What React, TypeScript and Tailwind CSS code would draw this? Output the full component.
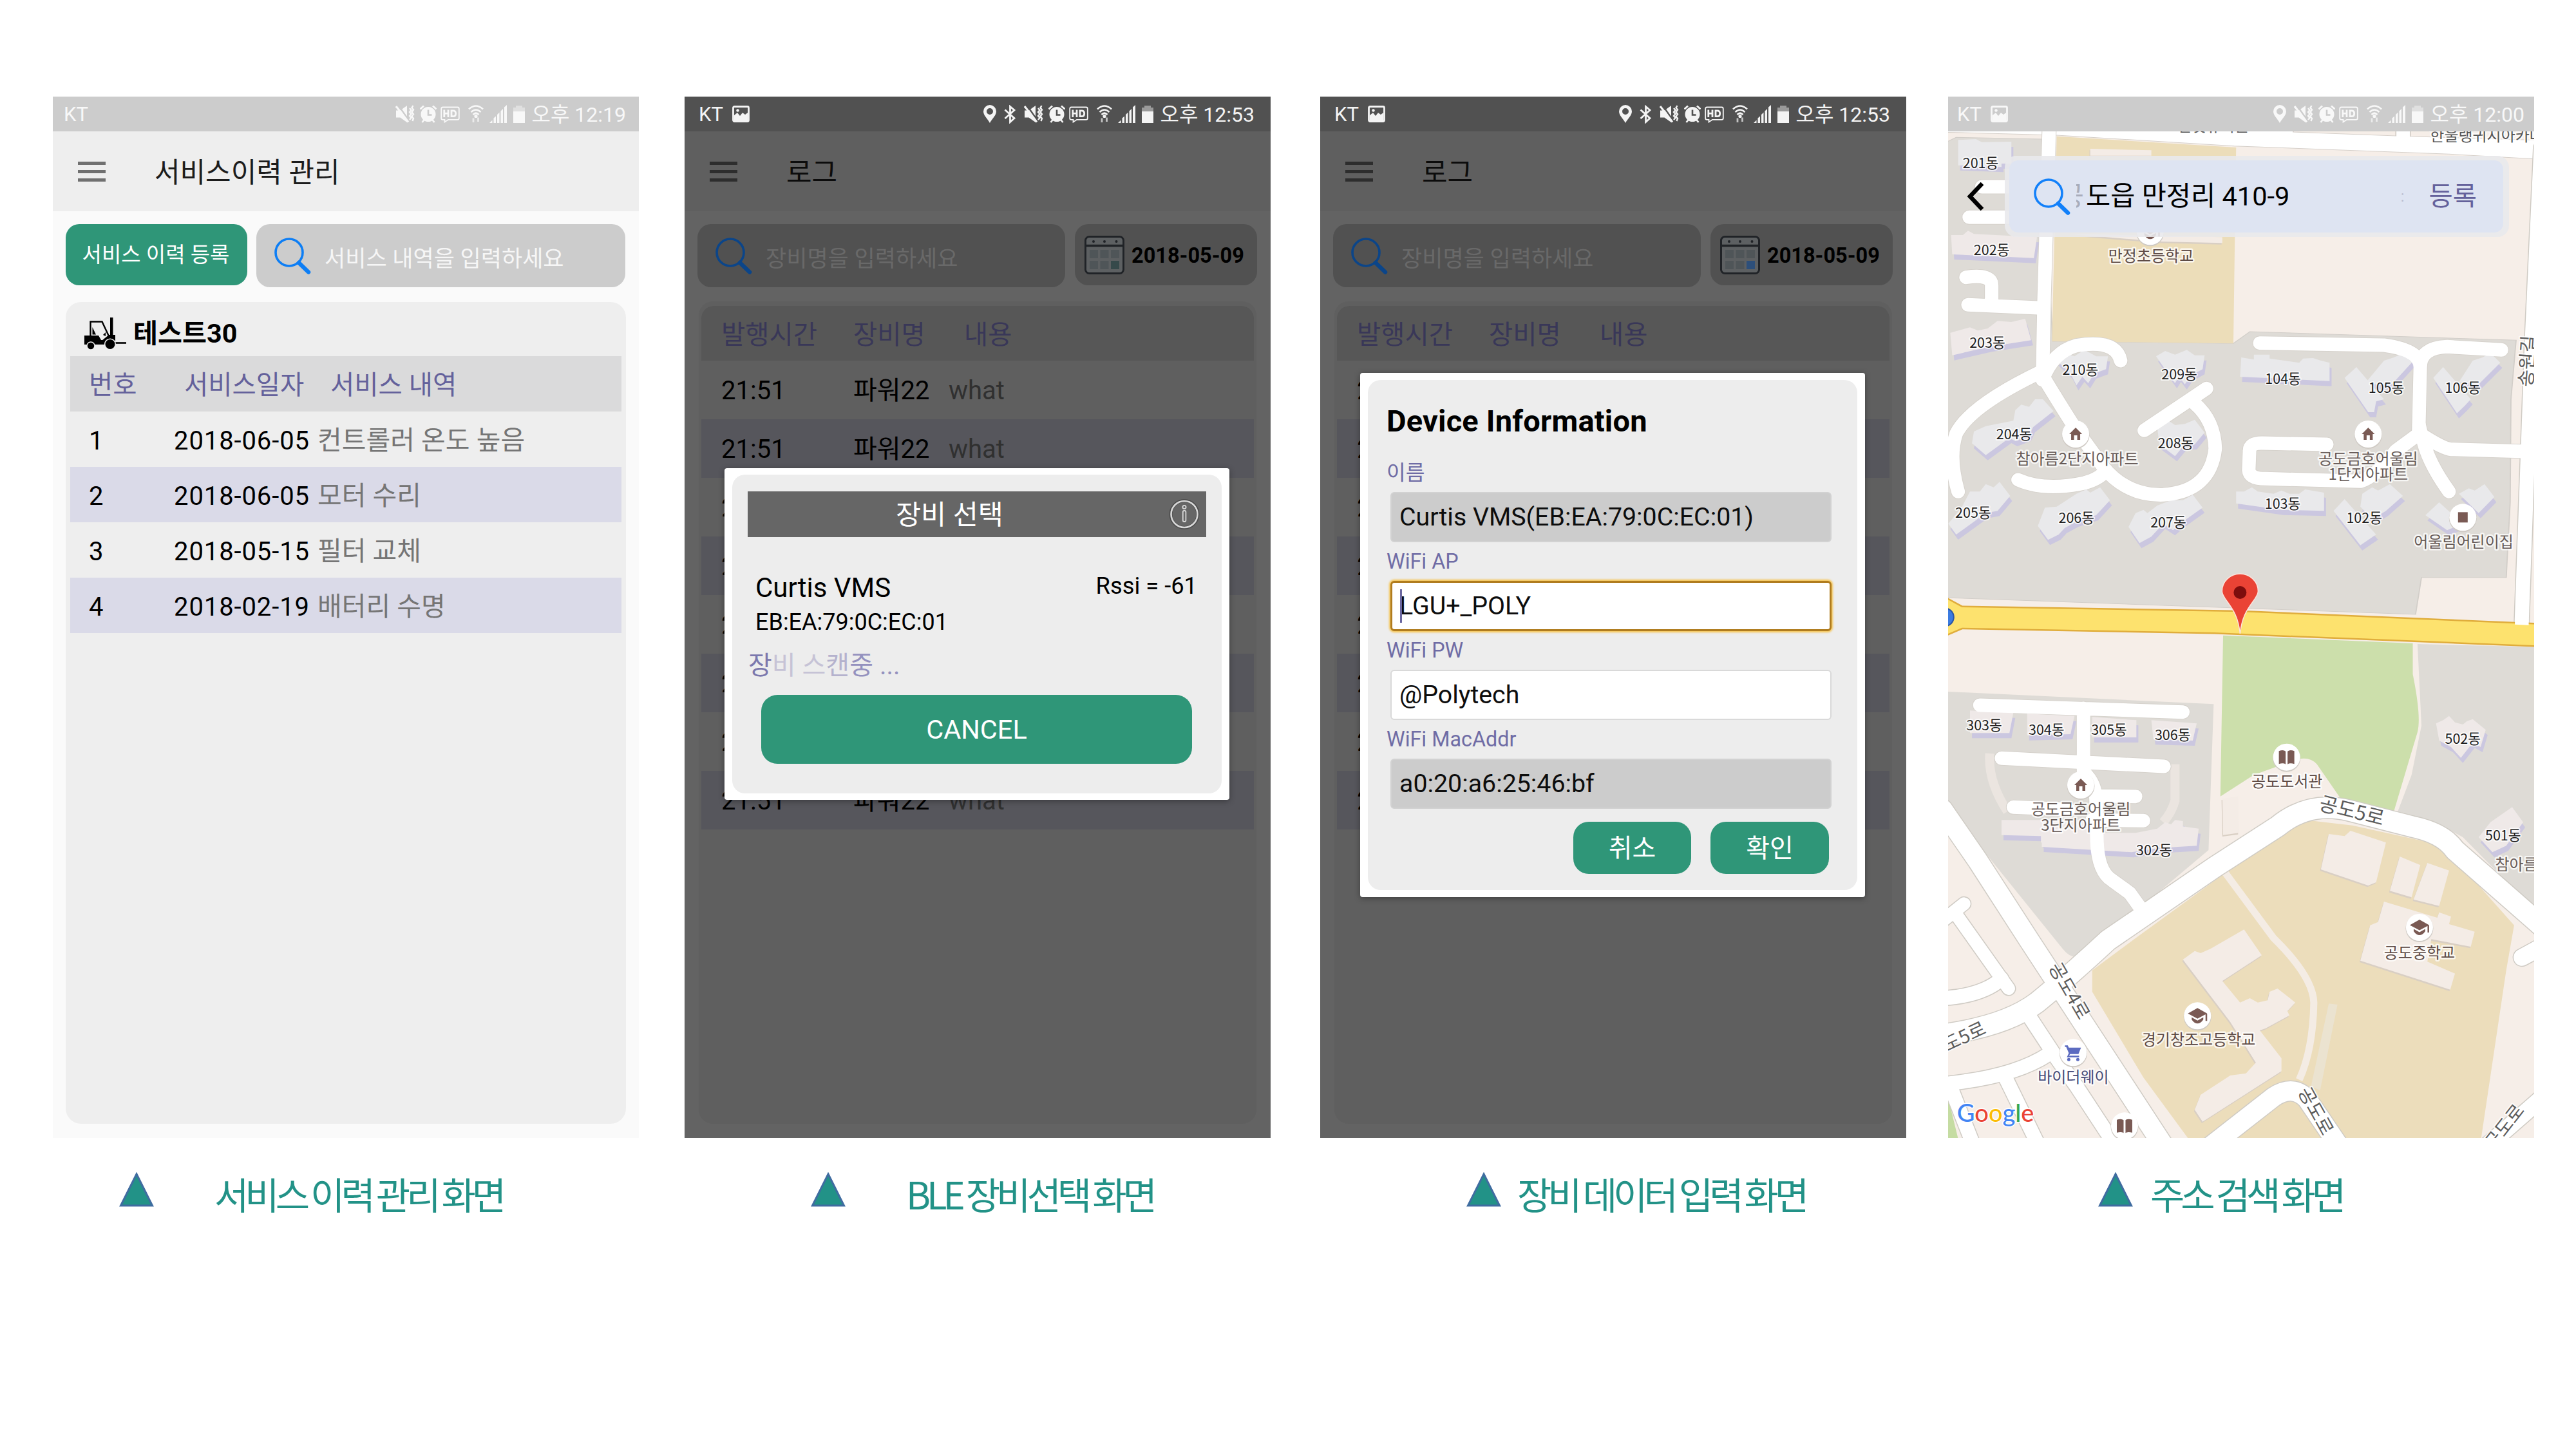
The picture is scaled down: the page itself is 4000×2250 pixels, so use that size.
import React from "react";

const KR = "font-[family-name:Roboto,'Noto_Sans_CJK_KR',sans-serif]";

/* ---------- status bar ---------- */

const PictureIcon = () => (
  <svg className="ml-[14px] h-[26px] w-[27px]" viewBox="0 0 27 26" fill="none">
    <rect x="1.5" y="1.5" width="24" height="23" rx="2" stroke="currentColor" strokeWidth="2.8" />
    <path d="M3 23V15l5-4 4 5 4-5 4 3 4-3v12z" fill="currentColor" />
    <circle cx="8.500" cy="7.500" r="2.200" fill="currentColor" />
  </svg>
);

const LocationIcon = () => (
  <svg className="h-[28px] w-[20px]" viewBox="0 0 20 28">
    <path fillRule="evenodd" d="M10 0A10 10 0 0 0 0 10C0 16.500 6.500 21 10 28C13.500 21 20 16.500 20 10A10 10 0 0 0 10 0ZM10 5A5 5 0 1 1 10 15A5 5 0 1 1 10 5Z" fill="currentColor" />
  </svg>
);

const BluetoothIcon = () => (
  <svg className="ml-[12px] h-[29px] w-[19px]" viewBox="0 0 19 29" fill="none" stroke="currentColor" strokeWidth="2.800">
    <path d="M1.500 7.500L16 20.500L9.500 26.500V2.500L16 8L1.500 21" />
  </svg>
);

const MuteIcon = () => (
  <svg className="ml-[12px] h-[28px] w-[30px]" viewBox="0 0 30 28" fill="none">
    <mask id="slash-gap">
      <rect width="30" height="28" fill="#fff" />
      <path d="M3.500-1L21 24" stroke="#000" strokeWidth="2.400" />
    </mask>
    <path mask="url(#slash-gap)" d="M1 8.500h6.500L18 1v26L7.500 19.500H1z" fill="currentColor" />
    <path d="M1 2L20 26.500" stroke="currentColor" strokeWidth="3" />
    <path d="M22 5l2.500 3-2.500 3 2.500 3-2.500 3 2.500 3-2.500 3M27.500 1l-2 3.300 2.500 3.300-2.500 3.400 2.500 3.300-2.500 3.300 2.500 3.400-1.500 4" stroke="currentColor" strokeWidth="2.400" />
  </svg>
);

const AlarmIcon = () => (
  <svg className="ml-[8px] h-[28px] w-[26px]" viewBox="0 0 26 28">
    <mask id="clock-hands">
      <rect width="26" height="28" fill="#fff" />
      <path d="M13 7.500V15.500H18.500" fill="none" stroke="#000" strokeWidth="2.600" />
    </mask>
    <path d="M0.500 6.500L6 1.500M25.500 6.500L20 1.500M3.500 27l4-5M22.500 27l-4-5" stroke="currentColor" strokeWidth="2.800" />
    <circle cx="13" cy="14.500" r="11.500" fill="currentColor" mask="url(#clock-hands)" />
  </svg>
);

const HdIcon = () => (
  <svg className="ml-[6px] h-[27px] w-[30px]" viewBox="0 0 30 27" fill="none" stroke="currentColor">
    <path d="M3.500 2.500H26.500Q28.800 2.500 28.800 5V19.500Q28.800 21.800 26.500 21.800H12L6.500 25.500V21.800H3.500Q1.200 21.800 1.200 19.500V5Q1.200 2.500 3.500 2.500Z" strokeWidth="1.800" />
    <path d="M5.800 6.500V18M12 6.500V18M5.800 12.200H12M17 7.800V16.700H19.500Q23.700 16.700 23.700 12.200Q23.700 7.800 19.500 7.800H17Z" strokeWidth="2.800" />
  </svg>
);

const WifiIcon = () => (
  <svg className="ml-[13px] h-[28px] w-[24px]" viewBox="0 0 24 28" fill="none" stroke="currentColor" strokeWidth="2.600">
    <path d="M1 6.500Q12-3.500 23 6.500M4.500 11Q12 4 19.500 11M7.500 15Q12 10.500 16.500 15" />
    <circle cx="12" cy="17.500" r="1.300" fill="currentColor" />
    <path d="M8 20.500v6.500M15.500 19.500v6.500" strokeWidth="2.800" opacity=".7" />
  </svg>
);

const SignalIcon = () => (
  <svg className="ml-[9px] h-[28px] w-[27px]" viewBox="0 0 27 28" fill="currentColor">
    <path d="M0 28L4.500 23.500V28zM6.500 20.500l3.500-3V28H6.500zM12 15l3.500-3.500V28H12zM17.500 9.500L21 6v22h-3.500zM23 3.500L27 0v28h-4z" />
  </svg>
);

const BatteryIcon = () => (
  <svg className="ml-[10px] h-[27px] w-[18px]" viewBox="0 0 18 27" fill="currentColor">
    <path d="M4 0h10v3h4v6H0V3h4z" opacity=".45" />
    <path d="M0 9h18v18H0z" />
  </svg>
);

function StatusBar({ time, picture, location, bluetooth, className }: { time: string; picture?: boolean; location?: boolean; bluetooth?: boolean; className: string }) {
  return (
    <div className={"relative flex h-[54px] shrink-0 items-center text-[32px] leading-none " + className}>
      <span className="text-[31px]">KT</span>
      {picture && <PictureIcon />}
      <div className="ml-auto flex items-center">
        {location && <LocationIcon />}
        {bluetooth && <BluetoothIcon />}
        <MuteIcon />
        <AlarmIcon />
        <HdIcon />
        <WifiIcon />
        <SignalIcon />
        <BatteryIcon />
        <span className="ml-[10px] pt-[2px] whitespace-nowrap">{time}</span>
      </div>
    </div>
  );
}

/* ---------- shared pieces ---------- */

function AppHeader({ title, className }: { title: string; className: string }) {
  return (
    <div className={"flex h-[124px] shrink-0 items-center pl-[39px] " + className}>
      <div className="flex w-[43px] flex-col gap-[8px]">
        <i className="h-[5px] bg-current opacity-60" />
        <i className="h-[5px] bg-current opacity-60" />
        <i className="h-[5px] bg-current opacity-60" />
      </div>
      <h1 className="ml-[76px] pt-[4px] text-[43px] leading-none">{title}</h1>
    </div>
  );
}

const Magnifier = ({ className }: { className: string }) => (
  <svg className={"h-[58px] w-[58px] shrink-0 " + className} viewBox="0 0 58 58" fill="none" stroke="currentColor">
    <circle cx="24" cy="24" r="21" strokeWidth="3.600" />
    <path d="M39 40L54 54.500" strokeWidth="6.500" strokeLinecap="round" />
  </svg>
);

const Forklift = () => (
  <svg className="h-[50px] w-[66px]" viewBox="0 0 66 50">
    <path d="M9.500 30V6.500H27.500L38.500 30" fill="none" stroke="#000" strokeWidth="2.400" />
    <path d="M12.500 15L18 26.500H12.500ZM29 27L33 23V29Z" fill="#000" />
    <path d="M0 28H22L26 35H47V42H0Z" fill="#000" />
    <path d="M27 36L38 27H48V40H27Z" fill="#000" />
    <path d="M40 0H44.500V30H40Z" fill="#000" />
    <path d="M48 39.500H65" stroke="#000" strokeWidth="2.600" />
    <circle cx="10" cy="44" r="6" fill="#000" stroke="#eee" strokeWidth="1.500" />
    <circle cx="40" cy="41.500" r="8.300" fill="#000" stroke="#eee" strokeWidth="1.500" />
  </svg>
);

/* ---------- screen 1 ---------- */

const services = [
  ["1", "2018-06-05", "컨트롤러 온도 높음"],
  ["2", "2018-06-05", "모터 수리"],
  ["3", "2018-05-15", "필터 교체"],
  ["4", "2018-02-19", "배터리 수명"],
];

function ServiceScreen() {
  return (
    <div className="flex h-[1617px] w-[910px] flex-col bg-[#fafafa]">
      <StatusBar time="오후 12:19" className="bg-[#cccccc] pr-[20px] pl-[17px] text-[#f8f8f8]" />
      <AppHeader title="서비스이력 관리" className="bg-[#eeeeee] text-[#1c1c1c]" />
      <div className="flex items-start gap-[14px] px-[20px] pt-[20px]">
        <button className="h-[95px] w-[282px] rounded-[21px] bg-[#2f9678] pr-[2px] text-[33px] leading-none whitespace-nowrap text-white">서비스 이력 등록</button>
        <div className="flex h-[98px] w-[573px] items-center rounded-[21px] bg-[#cccccc] pl-[27px]">
          <Magnifier className="text-[#0d7ef5]" />
          <span className="ml-[21px] pt-[10px] text-[35px] leading-none whitespace-nowrap text-[#f6f6f6]">서비스 내역을 입력하세요</span>
        </div>
      </div>
      <div className="mx-[20px] mt-[23px] h-[1276px] rounded-[24px] bg-[#eeeeee] px-[7px]">
        <div className="flex h-[84px] items-center pt-[13px] pl-[22px]">
          <Forklift />
          <b className="ml-[10px] pt-[2px] text-[41.300px] leading-none font-bold">테스트30</b>
        </div>
        <div className="grid h-[86px] grid-cols-[148px_227px_1fr] items-center bg-[#dadadb] pt-[5px] pl-[29px] text-[40.500px] leading-none text-[#64619b]">
          <span>번호</span>
          <span>서비스일자</span>
          <span>서비스 내역</span>
        </div>
        {services.map(([n, date, text], i) => (
          <div key={n} className={"grid h-[86px] grid-cols-[132px_223px_1fr] items-center pt-[5px] pl-[29px] text-[40px] leading-none text-black " + (i % 2 ? "bg-[#dadae8]" : "")}>
            <span>{n}</span>
            <span className="tracking-[0.9px]">{date}</span>
            <span className="text-[41px] text-[#757575]">{text}</span>
          </div>
        ))}
      </div>
    </div>
  );
}

/* ---------- log screens ---------- */

function CalendarIcon({ accent }: { accent: string }) {
  return (
    <svg className="h-[60px] w-[62px] shrink-0" viewBox="0 0 62 60">
      <rect x="1.500" y="1.500" width="59" height="57" rx="6" fill="#5d6062" stroke="#202327" strokeWidth="3" />
      <path d="M2 15.500H60" stroke="#202327" strokeWidth="3.500" />
      <g fill="#202327">
        <circle cx="14" cy="9" r="2" />
        <circle cx="31" cy="9" r="2" />
        <circle cx="49.500" cy="9" r="2" />
      </g>
      <g fill="#4f5558">
        <rect x="8" y="22" width="13" height="13" />
        <rect x="24.500" y="22" width="13" height="13" />
        <rect x="41" y="22" width="13" height="13" />
        <rect x="8" y="39" width="13" height="13" />
        <rect x="24.500" y="39" width="13" height="13" />
      </g>
      <rect x="41" y="39" width="13" height="13" fill={accent} />
    </svg>
  );
}

function LogScreen({ accent, children }: { accent: string; children: React.ReactNode }) {
  return (
    <div className="relative flex h-[1617px] w-[910px] flex-col bg-[#636363]">
      <StatusBar time="오후 12:53" picture location bluetooth className="bg-[#515151] pr-[25px] pl-[22px] text-[#f4f4f4]" />
      <AppHeader title="로그" className="bg-[#5f5f5f] text-[#0c0c0c]" />
      <div className="flex items-start gap-[15px] px-[20px] pt-[20px]">
        <div className="flex h-[98px] w-[571px] items-center rounded-[21px] bg-[#515151] pl-[27px]">
          <Magnifier className="text-[#0b4589]" />
          <span className="ml-[21px] pt-[10px] text-[35px] leading-none whitespace-nowrap text-[#696969]">장비명을 입력하세요</span>
        </div>
        <div className="flex h-[95px] w-[283px] items-center rounded-[21px] bg-[#515151] pl-[15px]">
          <CalendarIcon accent={accent} />
          <b className="ml-[11px] pt-[3px] text-[32.500px] leading-none font-bold text-black">2018-05-09</b>
        </div>
      </div>
      <div className="mx-[22px] mt-[22px] h-[1277px] rounded-[22px] bg-[#5f5f5f] px-[4px] pt-[7px]">
        <div className="grid h-[85px] grid-cols-[205px_172px_1fr] items-center rounded-t-[20px] bg-[#575757] pt-[6px] pl-[31px] text-[40.500px] leading-none text-[#393758]">
          <span>발행시간</span>
          <span>장비명</span>
          <span>내용</span>
        </div>
        {Array.from({ length: 8 }, (_, i) => (
          <div key={i} className={"grid h-[91px] grid-cols-[205px_148px_1fr] items-center pt-[2px] pl-[31px] text-[40px] leading-none text-black " + (i % 2 ? "bg-[#56565c]" : "")}>
            <span>21:51</span>
            <span>파워22</span>
            <span className="text-[#303030]">what</span>
          </div>
        ))}
      </div>
      {children}
    </div>
  );
}

function SelectDialog() {
  return (
    <div className="absolute top-[577px] left-[62px] h-[515px] w-[784px] rounded-[4px] bg-white px-[12px] py-[10px] shadow-[0_2px_10px_rgba(0,0,0,0.35)]">
      <div className="h-full rounded-[20px] bg-[#ededed] px-[24px] pt-[26px]">
        <div className="relative flex h-[71px] items-center bg-[#666666] text-white">
          <span className="pt-[4px] pl-[230px] text-[42.500px] leading-none">장비 선택</span>
          <svg className="absolute top-[11px] right-[10px] h-[49px] w-[48px]" viewBox="0 0 48 49" fill="none">
            <circle cx="24" cy="24.500" r="21" stroke="#4c4c4c" strokeWidth="5" />
            <circle cx="24" cy="24.500" r="20.500" stroke="#d8d8d8" strokeWidth="2.600" />
            <rect x="21.800" y="19" width="4.600" height="17" rx="2" stroke="#d8d8d8" strokeWidth="1.800" />
            <circle cx="24" cy="13.500" r="2.600" stroke="#d8d8d8" strokeWidth="1.800" />
          </svg>
        </div>
        <div className="mt-[57px] flex justify-between pr-[14px] pl-[12px] leading-none text-black">
          <div>
            <div className="text-[42px] leading-[44px]">Curtis VMS</div>
            <div className="mt-[13px] text-[36px] leading-[36px]">EB:EA:79:0C:EC:01</div>
          </div>
          <div className="text-[36.300px] leading-[37px]">Rssi = -61</div>
        </div>
        <div className="mt-[30px] pl-[1px] text-[40px] leading-[40px] text-[#7b78ad]">
          장<span className="text-[#c6c3d6]">비</span> <span className="text-[#c6c3d6]">스</span>
          <span className="text-[#b5b2cd]">캔</span>
          <span className="text-[#9491be]">중 ...</span>
        </div>
        <button className="mt-[25px] ml-[21px] block h-[107px] w-[669px] rounded-[25px] bg-[#2f9678] text-[41.500px] leading-none text-white">CANCEL</button>
      </div>
    </div>
  );
}

function Field({ label, value, kind }: { label: string; value: string; kind: "locked" | "focus" | "plain" }) {
  const look =
    kind === "locked"
      ? "border-2 border-[#d2d2d2] bg-[#cccccc]"
      : kind === "focus"
        ? "border-[3px] border-[#b07c1e] bg-white shadow-[0_0_3px_2px_#f5c453]"
        : "border-2 border-[#d9d9d9] bg-white";
  return (
    <div className="h-[138px]">
      <div className="text-[32.300px] leading-[40px] text-[#6f6ca5]">{label}</div>
      <div className={"relative mt-[10px] ml-[6px] flex h-[78px] w-[685px] items-center rounded-[6px] pt-[2px] text-[39.300px] leading-none text-[#0d0d0d] " + look + (kind === "focus" ? " pl-[11px]" : " pl-[12px]")}>
        {kind === "focus" && <i className="absolute top-[10px] left-[12px] h-[52px] w-[3px] bg-[#6a67a0]" />}
        <span>{value}</span>
      </div>
    </div>
  );
}

function InfoDialog() {
  return (
    <div className="absolute top-[429px] left-[62px] h-[814px] w-[784px] rounded-[4px] bg-white px-[12px] py-[11px] shadow-[0_2px_10px_rgba(0,0,0,0.35)]">
      <div className="h-full rounded-[20px] bg-[#ededed] px-[29px]">
        <h2 className="pt-[39px] text-[47px] leading-[50px] font-bold tracking-[0.2px] text-black">Device Information</h2>
        <div className="mt-[35px]">
          <Field label="이름" value="Curtis VMS(EB:EA:79:0C:EC:01)" kind="locked" />
          <Field label="WiFi AP" value="LGU+_POLY" kind="focus" />
          <Field label="WiFi PW" value="@Polytech" kind="plain" />
          <Field label="WiFi MacAddr" value="a0:20:a6:25:46:bf" kind="locked" />
        </div>
        <div className="mt-[10px] flex gap-[30px] pl-[290px]">
          <button className="h-[81px] w-[183px] rounded-[24px] bg-[#2f9678] pt-[3px] text-[40px] leading-none text-white">취소</button>
          <button className="h-[81px] w-[184px] rounded-[24px] bg-[#2f9678] pt-[3px] text-[40px] leading-none text-white">확인</button>
        </div>
      </div>
    </div>
  );
}

/* ---------- map ---------- */

/* Survey units are finer than pixels: 1.6333 per pixel across and 3 per pixel down. */
const px = (x: number) => x / 1.6333 - 15;
const py = (y: number) => y / 3 - 20;

const B = 1410;
const C = 2790;
const D = 3930;

const thinRoads: [number, string][] = [
  [0, "M281,200L268,1000L264,1370"],
  [0, "M110,480H185M78,622H185"],
  [0, "M70,902Q135,885 135,940V1030M75,1030L262,1045"],
  [0, "M264,1380Q290,1250 350,1220Q450,1190 462,1290"],
  [0, "M815,1208L1130,1218Q1222,1240 1222,1320L1218,1620M1428,1240L1290,1225Q1222,1230 1222,1320"],
  [B, "M262,-70Q80,90 45,220Q25,330 50,490"],
  [B, "M264,-50Q300,60 345,190L420,380Q480,510 570,505Q690,490 702,290Q700,160 650,80M522,205L680,10"],
  [B, "M202,435Q270,490 370,450Q410,430 425,390"],
  [B, "M985,270L820,264Q789,264 789,300L787,390Q789,430 830,430L1070,442Q1110,420 1160,300L1219,220"],
  [B, "M1219,180L1225,225Q1280,290 1300,293L1490,303M1228,240Q1240,350 1295,490"],
  [C, "M105,105L620,137M368,120V420M160,352L572,390"],
  [C, "M400,528L500,530M190,580L330,590M390,640L520,643M370,420Q400,470 400,560L402,740Q405,880 440,920L485,980L520,1070"],
];

const wideRoads: [number, string, number][] = [
  [0, "M1528,300L1505,1200L1479,2520", 22],
  [C, "M10,590L100,830L230,1200L600,2240", 31],
  [C, "M1540,1150L1310,780Q1280,700 1200,670L1040,595Q940,550 860,670L700,860L430,1200Q330,1370 250,1490Q170,1600 10,1640", 32],
  [C, "M10,1110L65,1030M45,1080L178,1425", 20],
  [D, "M10,330Q110,320 160,240", 22],
  [D, "M225,400L300,610L350,740L450,1020M280,590Q190,700 10,730M170,700L255,1020M30,740L90,1020", 22],
  [D, "M690,1020L850,790Q900,730 935,800L1020,1030", 30],
  [D, "M1480,140L1540,80M1540,780L1390,1020", 26],
];

/* Blocks of flats, each with a lilac face below it. */
const flats: [number, string][] = [
  [0, "50,262 95,258 110,272 185,270 185,372 160,372 160,388 50,380"],
  [0, "32,705 62,705 75,685 90,700 250,715 242,812 35,795"],
  [0, "30,1160 80,1135 100,1150 125,1140 150,1105 185,1110 220,1095 235,1195 130,1225 35,1265"],
  [0, "300,1290 320,1255 345,1270 370,1240 400,1270 430,1270 425,1330 395,1350 380,1395 365,1365 350,1405 335,1350"],
  [0, "552,1270 575,1245 600,1262 630,1240 650,1265 675,1265 670,1330 640,1360 625,1400 610,1365 600,1395 580,1345"],
  [0, "768,1275 800,1285 800,1262 840,1262 840,1280 915,1300 925,1280 950,1278 970,1290 992,1300 992,1385 765,1365"],
  [0, "1130,1290 1155,1275 1185,1250 1205,1290 1150,1400 1080,1400"],
  [0, "1355,1290 1380,1275 1400,1255 1425,1300 1370,1400 1320,1390"],
  [0, "1030,1370 1060,1320 1130,1470 1110,1480 1105,1530 1090,1530"],
  [0, "1255,1370 1280,1320 1350,1470 1335,1500 1315,1535"],
  [B, "195,110 210,85 230,95 245,60 265,60 292,115 240,190 230,230 195,255 180,240 120,320 85,265 90,210 120,185 190,160"],
  [B, "555,190 580,155 600,180 625,175 650,155 675,215 650,270 625,270 600,325 560,270"],
  [B, "80,490 105,490 120,455 140,470 155,445 182,510 150,580 120,590 45,690 25,640 60,560"],
  [B, "350,500 375,480 385,495 410,470 435,530 400,600 350,630 320,660 305,690 278,715 252,650 270,565 300,560"],
  [B, "590,530 620,530 645,505 670,565 620,630 595,670 570,640 540,700 510,730 482,655 500,590 520,575 530,590 555,555"],
  [B, "755,490 775,490 795,470 810,490 850,500 870,485 890,500 915,500 930,480 978,495 978,580 870,575 755,545"],
  [B, "1075,500 1100,470 1115,485 1145,455 1178,510 1135,580 1100,620 1070,560"],
  [B, "1002,580 1030,525 1110,690 1070,740"],
  [B, "1320,500 1345,475 1360,485 1385,455 1410,515 1370,590"],
  [B, "1235,600 1270,540 1330,640 1290,670"],
  [C, "80,130 190,140 180,235 80,235"],
  [C, "225,145 345,155 335,240 225,245"],
  [C, "390,160 502,175 502,255 390,255"],
  [C, "540,175 655,190 645,270 545,265"],
  [C, "160,640 380,640 380,745 260,745 260,715 160,710"],
  [C, "262,700 500,700 555,680 575,650 590,660 600,640 620,645 620,670 660,680 655,760 560,770 490,790 262,765"],
  [C, "1262,190 1280,175 1295,155 1310,185 1330,195 1340,180 1355,170 1388,220 1375,300 1355,280 1325,350 1300,300 1270,270"],
  [C, "1370,720 1400,650 1455,580 1483,650 1440,760 1405,790"],
];

const schoolBlocks: [number, string][] = [
  [0, "385,303 540,310 540,335 385,335"],
  [0, "330,700 720,715 720,742 560,735"],
  [C, "990,705 1030,715 1045,690 1135,745 1110,930 1090,945 970,870"],
  [C, "1170,810 1222,850 1200,1000 1145,970"],
  [C, "1240,840 1295,875 1270,1040 1205,1010"],
  [C, "1130,1020 1265,1095 1270,1070 1300,1090 1295,1125 1360,1160 1350,1230 1250,1195 1240,1300 1310,1355 1298,1430 1070,1295 1095,1130 1115,1115"],
  [D, "775,10 820,130 720,250 765,350 790,330 810,350 835,340 840,300 860,285 905,350 885,390 890,410 830,470 815,480 870,610 870,670 670,905 650,850 665,780 740,690 780,680 805,630 740,440 620,150 650,110 665,120 690,100"],
  [C, "720,540 760,530 762,700 722,710"],
];

const flatNames: [number, number, string][] = [
  [107, 370, "201동"], [135, 775, "202동"], [124, 1205, "203동"], [360, 1332, "210동"], [611, 1353, "209동"],
  [874, 1373, "104동"], [1136, 1417, "105동"], [1330, 1417, "106동"],
  [192, B + 222, "204동"], [602, B + 265, "208동"], [88, B + 587, "205동"], [350, B + 612, "206동"], [583, B + 632, "207동"],
  [873, B + 545, "103동"], [1080, B + 612, "102동"],
  [116, C + 198, "303동"], [274, C + 218, "304동"], [433, C + 218, "305동"], [594, C + 242, "306동"], [547, C + 780, "302동"],
  [1330, C + 262, "502동"], [1432, C + 712, "501동"],
];

const placeNames: [number, number, string, string][] = [
  [539, 800, "만정초등학교", "#5d4a45"],
  [697, 196, "한빛유치원", "#555"],
  [352, B + 335, "참아름2단지아파트", "#665a57"],
  [1090, B + 335, "공도금호어울림", "#665a57"],
  [1090, B + 408, "1단지아파트", "#665a57"],
  [1332, B + 722, "어울림어린이집", "#665a57"],
  [884, C + 460, "공도도서관", "#5d4a45"],
  [361, C + 588, "공도금호어울림", "#665a57"],
  [361, C + 662, "3단지아파트", "#665a57"],
  [1220, D + 118, "공도중학교", "#5d4a45"],
  [660, D + 522, "경기창조고등학교", "#5d4a45"],
  [342, D + 695, "바이더웨이", "#454a78"],
  [1466, C + 846, "참아름", "#665a57"],
  [1409, 241, "한울랭귀지아카데미", "#555"],
];

const streetNames: [number, number, string, number, number][] = [
  [1048, C + 600, "공도5로", 14, 31],
  [332, D + 296, "공도4로", 60, 29],
  [957, D + 856, "공도로", 61, 29],
  [46, D + 526, "공도5로", -25, 29],
  [1435, D + 930, "공도로", -52, 29],
  [1494, 1292, "송원길", -86, 29],
];

const glyphs: Record<string, React.ReactNode> = {
  home: <path d="M0-10L10 0H7V9H2.500V2H-2.500V9H-7V0H-10Z" fill="#7a5a54" />,
  square: <rect x="-7.500" y="-8" width="15" height="16" fill="#7a5a54" />,
  book: <path d="M-12-9.500Q-5-12-1.500-9V11Q-5 8.500-12 10.500ZM12-9.500Q5-12 1.500-9V11Q5 8.500 12 10.500Z" fill="#7a5a54" />,
  school: <path d="M0-12L15-3.500L0 4.500L-15-3.500ZM-9 2.500L0 7.500L9 2.500V6Q5 12 0 12Q-5 12-9 6ZM12.500-3H15V8H12.500Z" fill="#7a5a54" />,
  cart: (
    <g fill="#5c6bc0">
      <path d="M-13-11H-8.500L-7-7.500H12L8 2.500H-5L-6.500 5H9V7.500H-10L-7 1L-11-8.500H-13Z" />
      <circle cx="-7" cy="11" r="2.500" />
      <circle cx="7" cy="11" r="2.500" />
    </g>
  ),
};

const places: [number, number, string][] = [
  [537, 688, "school"], [348, B + 222, "home"], [1090, B + 222, "home"], [1330, B + 610, "square"], [883, C + 347, "book"],
  [361, C + 477, "home"], [1220, C + 1140, "school"], [657, D + 412, "school"], [342, D + 583, "cart"], [472, D + 925, "book"],
];

const shift = (y: number) => "translate(0 " + y + ")";

function StreetMap() {
  return (
    <svg className="absolute inset-0 h-[1617px] w-[910px]" viewBox="0 0 910 1617" fontFamily="'Noto Sans CJK KR', sans-serif">
      <rect width="910" height="1617" fill="#f6eee8" />
      <g transform="translate(-15 -20) scale(0.612257 0.333333)">
        {/* residential ground */}
        <path d="M0,290L45,250L262,258L290,1200L748,1210L790,1155L1465,1195L1452,1470L1450,1950L1440,2300L1225,2300L1210,2472L800,2445L0,2393Z" fill="#dedbd6" stroke="#d2cec9" strokeWidth="3" />
        <path d="M0,2830L698,2890L685,3570L530,3810L380,4040Q345,4100 315,4030L100,3540L0,3300Z" fill="#dedbd6" />
        <path d="M1215,2610L1540,2625V3900L1330,3510L1270,3450L1165,3390L1200,3220L1225,2990Z" fill="#dedbd6" />
        <path d="M895,4725L975,4920H740Z" fill="#dedbd6" />
        <path d="M880,4790L925,4790L960,4920H850L835,4870Z" fill="#ebe9e2" />
        {/* school grounds and park */}
        <path d="M300,245L755,297L748,1210L288,1200Z" fill="#ecddb9" />
        <path d="M930,3430L1050,3455L1260,3540L1300,3590L1460,3920L1440,4130L1375,4930H640L520,4630L390,4230V4130L500,3980L710,3700L870,3490Z" fill="#ecddbb" />
        <path d="M722,2570L1203,2607V2750Q1225,2950 1215,3020L1155,3390L1020,3330L960,3170Q940,3130 905,3150L800,3220L715,3320Z" fill="#ccdfab" />
        <path d="M24,4720L52,4930H10V4720Z" fill="#c5dca2" />
        <path d="M990,4285L1012,4290L968,4690L945,4670Z" fill="#ebe3d0" />
        <path d="M725,3670L850,3980Q950,4160 952,4280Q950,4500 915,4640" fill="none" stroke="#f4ece4" strokeWidth="11" vectorEffect="non-scaling-stroke" />
        <path d="M130,3120Q125,3250 175,3390M600,3170V3340Q590,3400 570,3440" fill="none" stroke="#ebe5e0" strokeWidth="14" vectorEffect="non-scaling-stroke" />
        {/* roads */}
        <path d="M0,200H1540V353L1295,328L750,290L300,240L0,225Z" fill="#fff" stroke="#d6d0ca" strokeWidth="3" />
        <path d="M900,190H1160V243L900,225ZM1197,190H1540V264L1197,245Z" fill="#f6eee8" stroke="#d6d0ca" strokeWidth="3" />
        <g fill="none" strokeLinecap="round" strokeLinejoin="round">
          {wideRoads.map(([y, d, w]) => (
            <path key={"c" + d} d={d} transform={shift(y)} stroke="#cfcbc4" strokeWidth={w + 3} vectorEffect="non-scaling-stroke" />
          ))}
          {thinRoads.map(([y, d]) => (
            <path key={"c" + d} d={d} transform={shift(y)} stroke="#d6d2cc" strokeWidth="23" vectorEffect="non-scaling-stroke" />
          ))}
        </g>
        {flats.map(([y, p]) => (
          <g key={p} transform={shift(y)}>
            <polygon points={p} fill="#cbc7e0" transform="translate(5 24)" />
            <polygon points={p} fill={p.startsWith("30,") || p.startsWith("32,") || y === C ? "#efe9e8" : "#e9e9eb"} />
          </g>
        ))}
        {schoolBlocks.map(([y, p]) => (
          <g key={p} transform={shift(y)}>
            <polygon points={p} fill="#d9cfc4" transform="translate(-2 7)" />
            <polygon points={p} fill="#f4ece6" />
          </g>
        ))}
        <g fill="none" strokeLinecap="round" strokeLinejoin="round" stroke="#fff">
          {thinRoads.map(([y, d]) => (
            <path key={d} d={d} transform={shift(y)} strokeWidth="21" vectorEffect="non-scaling-stroke" />
          ))}
          {wideRoads.map(([y, d, w]) => (
            <path key={d} d={d} transform={shift(y)} strokeWidth={w} vectorEffect="non-scaling-stroke" />
          ))}
        </g>
        {/* main avenue */}
        <path d="M0,2375L60,2435L770,2457L1540,2517V2622L700,2560L60,2538L0,2585Z" fill="#fde26e" stroke="#e0ad3c" strokeWidth="2.500" vectorEffect="non-scaling-stroke" />
        <path d="M1462,2490H1497V2522L1462,2519Z" fill="#fff" />
      </g>
      <circle cx={px(16)} cy={py(B + 1075)} r="14" fill="#3b7be0" stroke="#2a55a5" strokeWidth="2" />
      {places.map(([x, y, g]) => (
        <g key={x + "-" + y} transform={"translate(" + px(x) + " " + py(y) + ")"}>
          <circle cy="1.500" r="21.500" fill="#cfcac4" />
          <circle r="21" fill="#fff" />
          {glyphs[g]}
        </g>
      ))}
      <g textAnchor="middle" strokeLinejoin="round" paintOrder="stroke" stroke="#fff" strokeOpacity=".75">
        {flatNames.map(([x, y, t]) => (
          <text key={t} x={px(x)} y={py(y) + 8} fontSize="21.500" fill="#1f1f1f" strokeWidth="4">{t}</text>
        ))}
        {placeNames.map(([x, y, t, c]) => (
          <text key={t + y} x={px(x)} y={py(y) + 9} fontSize="24" fill={c} strokeWidth="5">{t}</text>
        ))}
        {streetNames.map(([x, y, t, r, s]) => (
          <text key={t + y} transform={"translate(" + px(x) + " " + py(y) + ") rotate(" + r + ")"} y="10" fontSize={s} fill="#5c5c5c" strokeWidth="4">{t}</text>
        ))}
      </g>
      <path transform={"translate(" + px(765) + " " + py(B + 1152) + ")"} d="M0 0C-3-26-10-36-20-50C-26-58-28-62-28-66A28 27 0 0 1 28-66C28-62 26-58 20-50C10-36 3-26 0 0Z" fill="#ea4335" stroke="#fbe3dc" strokeWidth="1.500" />
      <circle cx={px(765)} cy={py(B + 960)} r="10" fill="#7d0d0d" />
      <text x={px(47)} y={py(D + 905)} fontFamily="Lato, sans-serif" fontSize="38" fontWeight="500" paintOrder="stroke" stroke="#fff" strokeWidth="3">
        <tspan fill="#4285f4">G</tspan>
        <tspan fill="#ea4335">o</tspan>
        <tspan fill="#fbbc05">o</tspan>
        <tspan fill="#4285f4">g</tspan>
        <tspan fill="#34a853">l</tspan>
        <tspan fill="#ea4335">e</tspan>
      </text>
    </svg>
  );
}

function MapScreen() {
  return (
    <div className="relative h-[1617px] w-[910px] overflow-hidden">
      <StreetMap />
      <StatusBar time="오후 12:00" picture location className="bg-[#cccccc] pr-[15px] pl-[14px] text-[#f8f8f8]" />
      <div className="relative mt-[38px] flex items-center pl-[29px]">
        <svg className="h-[44px] w-[27px]" viewBox="0 0 27 44" fill="none">
          <path d="M24 2L5 22L24 42" stroke="#000" strokeWidth="6.500" />
        </svg>
        <div className="ml-[32px] w-[783px] rounded-[18px] bg-[#e9e9ec]/90 p-[7px] pr-[9px]">
          <div className="flex h-[112px] items-center rounded-[14px] bg-[#dee4f2] pr-[41px] pl-[37px] leading-none">
            <Magnifier className="text-[#1280fa]" />
            <span className="ml-[9px] flex w-[12px] justify-end overflow-hidden text-[43px] text-[#a9acba]">공</span>
            <span className="ml-[3px] text-[41.500px] whitespace-nowrap text-black">도읍 만정리 410-9</span>
            <span className="mr-[38px] ml-auto text-[24px] text-[#b9bdd0]">:</span>
            <span className="text-[40.500px] whitespace-nowrap text-[#64619b]">등록</span>
          </div>
        </div>
      </div>
    </div>
  );
}

/* ---------- page ---------- */

function Caption({ text, className }: { text: string; className: string }) {
  return (
    <figcaption className={"flex items-start pt-[52px] " + className}>
      <svg className="h-[55px] w-[54px] shrink-0" viewBox="0 0 54 55">
        <path d="M27 4L51.500 53H2.500Z" fill="#229287" stroke="#3f6ca0" strokeWidth="3" />
      </svg>
      <span className="pt-[5px] font-[family-name:'Noto_Sans_CJK_KR',sans-serif] text-[58px] leading-[58px] tracking-[-6px] whitespace-nowrap text-[#229287]">{text}</span>
    </figcaption>
  );
}

export default function App() {
  return (
    <main className={"flex h-[2250px] w-[4000px] items-start overflow-hidden bg-white pt-[150px] pl-[82px] " + KR}>
      <figure className="w-[910px]">
        <ServiceScreen />
        <Caption text="서비스 이력 관리 화면" className="gap-[94px] pl-[103px]" />
      </figure>
      <figure className="ml-[71px] w-[910px]">
        <LogScreen accent="#36494a">
          <SelectDialog />
        </LogScreen>
        <Caption text="BLE 장비선택 화면" className="gap-[94px] pl-[196px]" />
      </figure>
      <figure className="ml-[77px] w-[910px]">
        <LogScreen accent="#2d4f7a">
          <InfoDialog />
        </LogScreen>
        <Caption text="장비 데이터 입력 화면" className="gap-[25px] pl-[227px]" />
      </figure>
      <figure className="ml-[65px] w-[910px]">
        <MapScreen />
        <Caption text="주소 검색 화면" className="gap-[27px] pl-[233px]" />
      </figure>
    </main>
  );
}
